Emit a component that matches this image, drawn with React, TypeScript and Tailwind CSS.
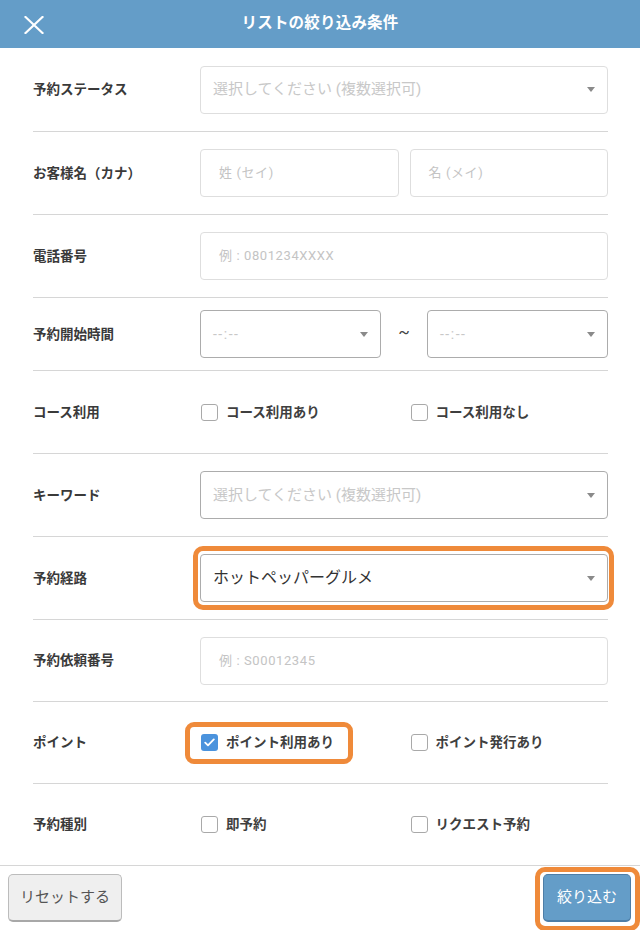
import React from 'react';

const Caret = () => (
  <div className="w-0 h-0 border-l-[4px] border-r-[4px] border-t-[5px] border-l-transparent border-r-transparent border-t-[#8a8a8a]" />
);

const Box = ({ checked = false }: { checked?: boolean }) =>
  checked ? (
    <span className="w-[17px] h-[17px] rounded-[3px] bg-[#4b93dd] flex items-center justify-center">
      <svg width="11" height="9" viewBox="0 0 11 9" fill="none">
        <path d="M1.2 4.6 L4 7.4 L9.8 1.4" stroke="white" strokeWidth="1.8" strokeLinecap="round" strokeLinejoin="round" />
      </svg>
    </span>
  ) : (
    <span className="w-[17px] h-[17px] rounded-[3px] border border-[#a9a9a9] bg-white" />
  );

const Check = ({ label, checked }: { label: string; checked?: boolean }) => (
  <label className="flex items-center gap-[8px] h-[18px] pl-px">
    <Box checked={checked} />
    <span className="text-[13.5px] font-bold text-[#3f3f3f]">{label}</span>
  </label>
);

const TextBox = ({ placeholder }: { placeholder: string }) => (
  <div className="h-[48px] rounded-[4px] border border-[#dedede] flex items-center px-[18px] text-[13px] tracking-[0.6px] text-[#c4c4c4]">
    {placeholder}
  </div>
);

const Select = ({
  text,
  muted = true,
  light = false,
  size = 'text-[15px]',
}: {
  text: string;
  muted?: boolean;
  light?: boolean;
  size?: string;
}) => (
  <div
    className={`h-[48px] rounded-[4px] border flex items-center justify-between pl-[12px] pr-[12px] ${
      light ? 'border-[#dedede]' : 'border-[#acacac]'
    }`}
  >
    <span className={`${size} ${muted ? 'text-[#c8c8c8]' : 'text-[#333]'}`}>{text}</span>
    <Caret />
  </div>
);

const Row = ({
  label,
  h,
  last = false,
  children,
}: {
  label: string;
  h: string;
  last?: boolean;
  children: React.ReactNode;
}) => (
  <div className={`flex items-center ${h} ${last ? '' : 'border-b border-[#d6d6d6]'}`}>
    <div className="w-[167px] shrink-0 text-[13.5px] font-bold text-[#3a3a3a]">{label}</div>
    <div className="flex-1">{children}</div>
  </div>
);

export default function App() {
  return (
    <div className="w-[640px] h-[930px] bg-white overflow-hidden flex flex-col font-['Roboto','Noto_Sans_CJK_JP',sans-serif]">
      {/* header */}
      <div className="h-[48px] shrink-0 bg-[#649dc8] relative flex items-center justify-center">
        <button className="absolute left-[24px] top-[16px]">
          <svg width="20" height="18" viewBox="0 0 20 18">
            <path d="M1.5 1 L18.5 17 M18.5 1 L1.5 17" stroke="white" strokeWidth="2.2" strokeLinecap="square" />
          </svg>
        </button>
        <h1 className="text-[15.5px] font-bold text-white tracking-[0.2px]">リストの絞り込み条件</h1>
      </div>

      {/* rows */}
      <div className="flex-1 flex flex-col pl-[33px] pr-[32px]">
        <Row label="予約ステータス" h="h-[84px]">
          <Select text="選択してください (複数選択可)" light />
        </Row>
        <Row label="お客様名（カナ）" h="h-[83px]">
          <div className="grid grid-cols-2 gap-[11px]">
            <TextBox placeholder="姓 (セイ)" />
            <TextBox placeholder="名 (メイ)" />
          </div>
        </Row>
        <Row label="電話番号" h="h-[83px]">
          <TextBox placeholder="例 : 0801234XXXX" />
        </Row>
        <Row label="予約開始時間" h="h-[73px]">
          <div className="flex items-center">
            <div className="w-[181px]">
              <Select text="--:--" size="text-[14px] tracking-[1.5px]" />
            </div>
            <div className="flex-1 text-center text-[17px] text-[#444] pb-[2px]">~</div>
            <div className="w-[181px]">
              <Select text="--:--" size="text-[14px] tracking-[1.5px]" />
            </div>
          </div>
        </Row>
        <Row label="コース利用" h="h-[83px]">
          <div className="grid grid-cols-2 gap-[11px]">
            <Check label="コース利用あり" />
            <Check label="コース利用なし" />
          </div>
        </Row>
        <Row label="キーワード" h="h-[83px]">
          <Select text="選択してください (複数選択可)" />
        </Row>
        <Row label="予約経路" h="h-[83px]">
          <div className="relative">
            <Select text="ホットペッパーグルメ" muted={false} size="text-[16px]" />
            <div className="absolute -left-[7px] -right-[6px] -top-[8px] -bottom-[8px] border-[5px] border-[#ef8a3a] rounded-[10px] pointer-events-none" />
          </div>
        </Row>
        <Row label="予約依頼番号" h="h-[82px]">
          <TextBox placeholder="例 : S00012345" />
        </Row>
        <Row label="ポイント" h="h-[82px]">
          <div className="grid grid-cols-2 gap-[11px] items-center">
            <div className="flex">
              <div className="relative">
                <Check label="ポイント利用あり" checked />
                <div className="absolute -left-[15px] -right-[19px] -top-[12px] -bottom-[12px] border-[5px] border-[#ef8a3a] rounded-[9px] pointer-events-none" />
              </div>
            </div>
            <Check label="ポイント発行あり" />
          </div>
        </Row>
        <Row label="予約種別" h="h-[81px]" last>
          <div className="grid grid-cols-2 gap-[11px]">
            <Check label="即予約" />
            <Check label="リクエスト予約" />
          </div>
        </Row>
      </div>

      {/* footer */}
      <div className="h-[65px] shrink-0 border-t border-[#d6d6d6] flex items-start justify-between pt-[8px] pl-[8px] pr-[9px]">
        <button className="w-[114px] h-[48px] rounded-[5px] bg-[#efefef] border border-[#bcbcbc] border-b-2 border-b-[#a8a8a8] text-[15px] text-[#555]">
          リセットする
        </button>
        <div className="relative">
          <button className="w-[88px] h-[48px] rounded-[5px] bg-[#649dc8] border border-[#4e7ea7] border-b-2 text-[15px] text-white">
            絞り込む
          </button>
          <div className="absolute -left-[8px] -right-[9px] -top-[7px] -bottom-[9px] border-[5px] border-[#ef8a3a] rounded-[10px] pointer-events-none" />
        </div>
      </div>
    </div>
  );
}
